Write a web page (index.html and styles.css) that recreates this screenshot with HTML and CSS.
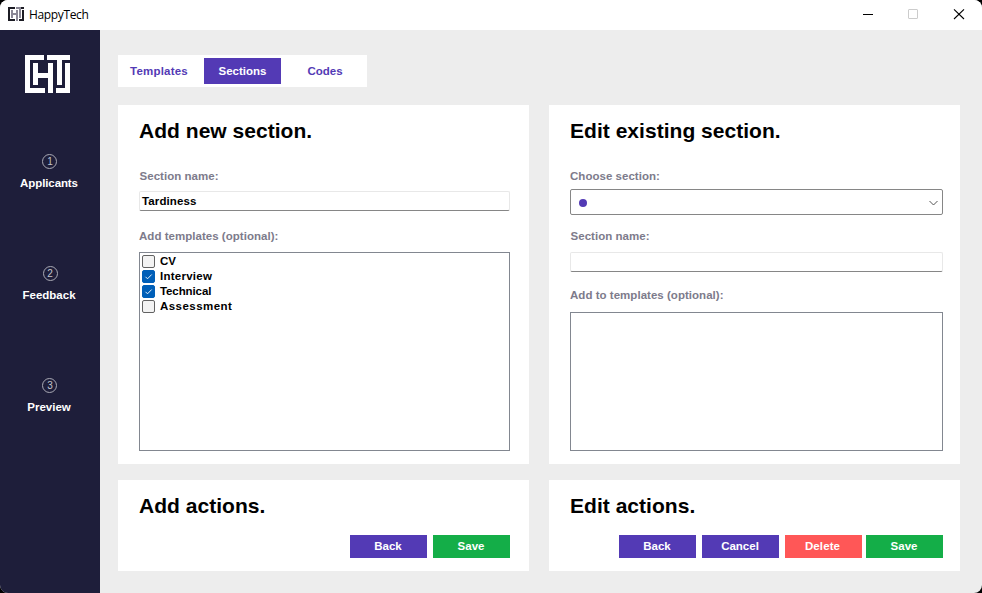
FILE: index.html
```html
<!DOCTYPE html>
<html lang="en">
<head>
<meta charset="utf-8">
<title>HappyTech</title>
<link rel="stylesheet" href="styles.css">
</head>
<body>
<svg class="defs" width="0" height="0" aria-hidden="true">
  <symbol id="logo" viewBox="0 0 45 38">
    <path d="M0 0h19v5H5v28h15v5H0z"/>
    <path d="M8 8h5v10h10V8h5v30h-5V23H13v7H8z"/>
    <path d="M22 0h23v5h-8v25h-5V5H22z"/>
    <path d="M40 8h5v30H31v-5h9z"/>
  </symbol>
</svg>
<div class="window">
  <header class="titlebar">
    <svg class="app-icon" viewBox="0 0 16 14">
      <g fill="#8a8795"><path d="M3 3h2v3h3V3h2v11H8V8H5v3H3z"/><path d="M8 0h6v2h-1v9h-2V2H8z"/></g>
      <path fill="#1c1c24" d="M0 0h7v2H2v10h5v2H0zM13 0h3v2h-3zM14 3h2v11h-5v-2h3z"/>
    </svg>
    <span class="app-name">HappyTech</span>
    <svg class="controls" width="122" height="30" viewBox="860 0 122 30" fill="none">
      <path d="M863 14.5h10" stroke="#000"/>
      <rect x="908.500" y="9.500" width="9" height="9" rx=".5" stroke="#ccc"/>
      <path d="M954 9.300l10 9.700M964 9.300l-10 9.700" stroke="#000" stroke-width="1.100"/>
    </svg>
  </header>
  <div class="body">
    <nav class="sidebar">
      <svg class="logo"><use href="#logo"/></svg>
      <a class="step"><span class="num">1</span><span class="w-applicants">Applicants</span></a>
      <a class="step"><span class="num">2</span><span class="w-feedback">Feedback</span></a>
      <a class="step"><span class="num">3</span><span class="w-preview">Preview</span></a>
    </nav>
    <main class="main">
      <div class="tabs">
        <button class="tab w-templates">Templates</button>
        <button class="tab active">Sections</button>
        <button class="tab">Codes</button>
      </div>
      <div class="grid">
        <section class="card add">
          <h2>Add new section.</h2>
          <label class="label first nudge">Section name:</label>
          <div class="input">Tardiness</div>
          <label class="label second">Add templates (optional):</label>
          <ul class="list">
            <li><i class="check"></i><span>CV</span></li>
            <li><i class="check on"><svg viewBox="0 0 13 13"><path d="M3.500 6.800l2 2 4.200-4.300"/></svg></i><span class="w-interview">Interview</span></li>
            <li><i class="check on"><svg viewBox="0 0 13 13"><path d="M3.500 6.800l2 2 4.200-4.300"/></svg></i><span class="w-technical">Technical</span></li>
            <li><i class="check"></i><span class="w-assessment">Assessment</span></li>
          </ul>
        </section>
        <section class="card edit">
          <h2>Edit existing section.</h2>
          <label class="label first">Choose section:</label>
          <div class="select"><i class="dot"></i><svg width="9" height="6" viewBox="0 0 9 6"><path d="M.5 1l4 4 4-4"/></svg></div>
          <label class="label second nudge">Section name:</label>
          <div class="input"></div>
          <label class="label third">Add to templates (optional):</label>
          <ul class="list"></ul>
        </section>
        <section class="card actions">
          <h2>Add actions.</h2>
          <div class="buttons"><button class="btn">Back</button><button class="btn save">Save</button></div>
        </section>
        <section class="card edit actions">
          <h2>Edit actions.</h2>
          <div class="buttons"><button class="btn">Back</button><button class="btn">Cancel</button><button class="btn delete">Delete</button><button class="btn save last">Save</button></div>
        </section>
      </div>
    </main>
  </div>
</div>
</body>
</html>
```
FILE: styles.css
```css
* { box-sizing: border-box; }
body {
  margin: 0;
  background: #000;
  font: bold 11.5px/15px "Liberation Sans", Arial, sans-serif;
  color: #000;
}
.defs { position: absolute; }
.window {
  width: 982px;
  height: 593px;
  border-radius: 8px;
  overflow: hidden;
  background: #ededed;
}
.titlebar {
  height: 30px;
  background: #fff;
  display: flex;
  align-items: center;
  padding-left: 8px;
}
.app-icon { width: 16px; height: 14px; margin-top: -2px; }
.app-name {
  font: 12px/16px "Open Sans", sans-serif;
  letter-spacing: -.35px;
  margin-left: 5px;
}
.controls { margin-left: auto; }
.body { display: flex; height: 563px; }
.sidebar {
  width: 100px;
  background: #1e1e3a;
  color: #fff;
  display: flex;
  flex-direction: column;
  align-items: center;
  padding-top: 25px;
}
.logo { width: 45px; height: 38px; fill: #fff; margin: 0 5px 61px 0; }
.step {
  height: 112px;
  display: flex;
  flex-direction: column;
  align-items: center;
  gap: 7px;
  flex: none;
  padding-right: 2px;
}
.num {
  width: 15px;
  height: 15px;
  border: 1px solid #a9a9b4;
  border-radius: 50%;
  font: 10px/13px "Liberation Sans", sans-serif;
  color: #c4c4cc;
  text-align: center;
  margin-left: 2px;
}
.main { padding: 25px 22px 0 18px; flex: 1; }
.tabs {
  width: 249px;
  height: 32px;
  background: #fff;
  display: flex;
  padding: 3px 3px 3px 2px;
}
.tabs .tab { width: 78px; flex: none; }
.tabs .active { width: 77px; margin: 0 5px 0 6px; }
.tab, .btn {
  border: 0;
  padding: 0;
  font: inherit;
  background: #fff;
  color: #533ab5;
}
.active, .btn { background: #533ab5; color: #fff; }
.grid {
  margin-top: 18px;
  display: grid;
  grid-template-columns: 411px 411px;
  grid-template-rows: 359px 91px;
  gap: 16px 20px;
}
.card {
  background: #fff;
  padding: 13px 19px 13px 21px;
  display: flex;
  flex-direction: column;
}
.edit { padding-right: 17px; }
h2 { margin: 0; font-size: 21px; line-height: 26px; letter-spacing: .03px; }
.label { color: #7d7b8b; letter-spacing: .03px; }
.nudge { padding-left: .5px; }
.first { margin-top: 25px; }
.add .input { margin-top: 7px; }
.input {
  height: 20px;
  border: 1px solid #e8e8e8;
  border-bottom-color: #868686;
  border-radius: 2px;
  padding: 2px;
  letter-spacing: .12px;
}
.second { margin-top: 18px; }
.add .list { margin-top: 8px; }
.list {
  list-style: none;
  margin: 9px 0 0;
  padding: 1px 2px;
  border: 1px solid #828790;
  flex: 1;
}
.list li { display: flex; align-items: center; gap: 5px; height: 15px; }
.check {
  width: 13px;
  height: 13px;
  border: 1px solid #626262;
  border-radius: 2px;
  background: #f3f3f3;
}
.on { background: #005fb8; border-color: #005fb8; }
.on svg { display: block; width: 13px; height: 13px; margin: -1px; fill: none; stroke: #fff; stroke-width: .9; }
.select {
  height: 26px;
  margin-top: 5px;
  border: 1px solid #868686;
  border-radius: 2px;
  display: flex;
  align-items: center;
  justify-content: space-between;
  padding: 1px 4px 0 8px;
}
.select svg { fill: none; stroke: #555; }
.dot { width: 8px; height: 8px; border-radius: 50%; background: #533ab5; }
.edit .second { margin-top: 14px; }
.edit .input { margin-top: 8px; }
.third { margin-top: 16px; }
.buttons { display: flex; justify-content: flex-end; gap: 6px; margin-top: 16px; }
.btn { width: 77px; height: 23px; padding-right: 1px; }
.save { background: #14ae48; }
.delete { background: #ff5757; padding-right: 2px; letter-spacing: .1px; }
.last { margin-left: -2px; }
.w-interview { letter-spacing: .25px; }
.w-technical { letter-spacing: -.1px; }
.w-assessment { letter-spacing: .45px; }
.w-applicants { letter-spacing: -.1px; }
.w-templates { letter-spacing: .2px; }
```
